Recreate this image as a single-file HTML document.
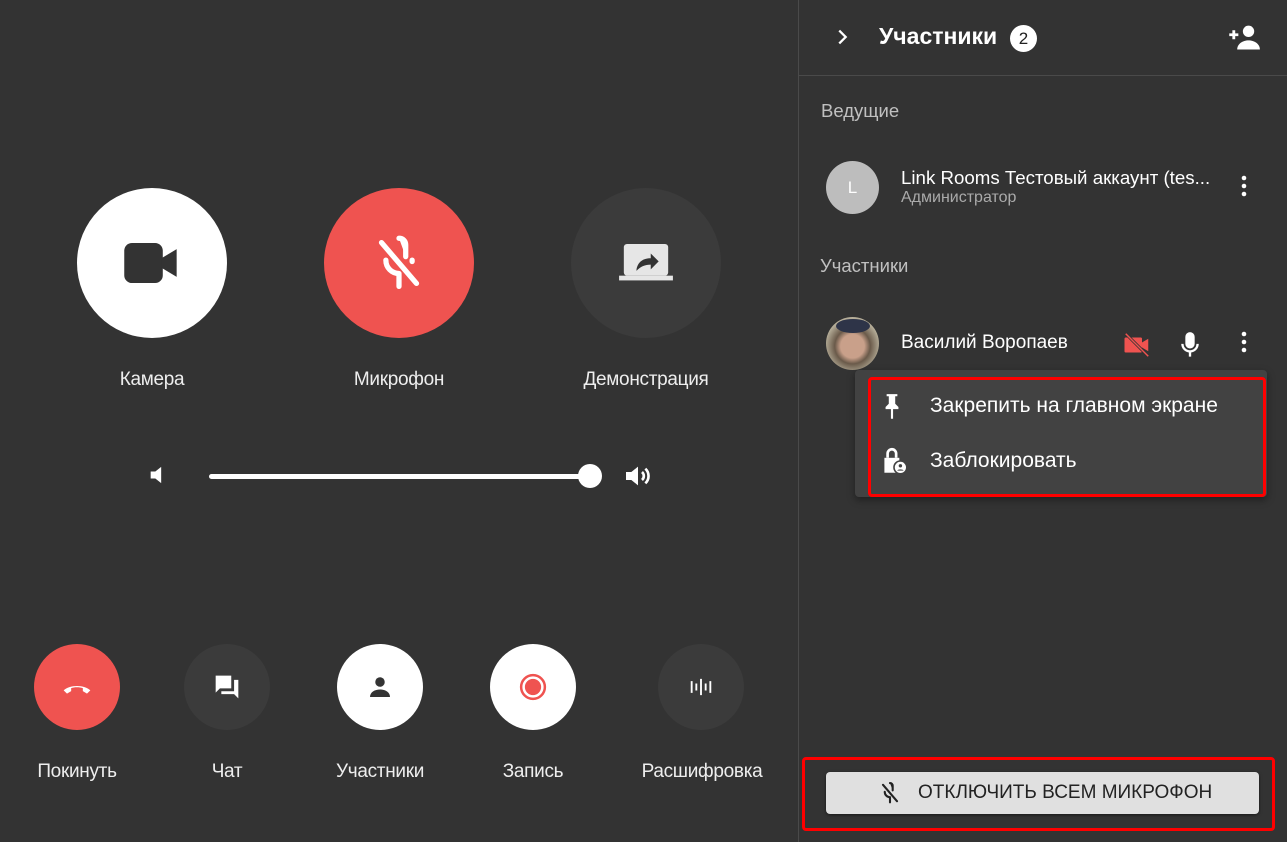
<!DOCTYPE html><html><head><meta charset="utf-8"><style>
*{margin:0;padding:0;box-sizing:border-box}
body{width:1287px;height:842px;background:#333;font-family:"Liberation Sans",sans-serif;color:#fff;position:relative;overflow:hidden}
.a{position:absolute}
.c{position:absolute;border-radius:50%;display:flex;align-items:center;justify-content:center}
.lbl{position:absolute;font-size:19px;color:#eee;transform:translateX(-50%);white-space:nowrap;letter-spacing:-0.3px}
</style></head><body>
<div class="c" style="left:77px;top:188px;width:150px;height:150px;background:#fff">
<svg width="74" height="74" viewBox="0 0 24 24"><rect x="3" y="5.5" width="12.5" height="13" rx="2.5" fill="#333"/><path d="M15 10.5l5-3v9l-5-3z" fill="#333"/></svg></div>
<div class="c" style="left:324px;top:188px;width:150px;height:150px;background:#ef5350">
<svg width="70" height="70" viewBox="0 0 24 24" fill="none" stroke="#fff" stroke-width="1.8" stroke-linecap="round"><path d="M12 3.5c1.4 0 2.3 1 2.3 2.3v4" fill="#fff"/><path d="M7.5 11c0 2.6 2 4.6 4.5 4.6"/><path d="M12 16v4"/><path d="M6 5l12 14"/><path d="M16.5 11v0.5"/></svg></div>
<div class="c" style="left:571px;top:188px;width:150px;height:150px;background:#3b3b3b">
<svg width="76" height="76" viewBox="0 0 24 24"><rect x="5" y="6" width="14" height="10" rx="1" fill="#e6e6e6"/><rect x="3.5" y="16" width="17" height="1.5" fill="#e6e6e6"/><path d="M9 14c0.5-2.5 2.2-3.5 4.5-3.5V9l2.5 2.5-2.5 2.5v-1.5c-1.8 0-3.3.6-4.5 2z" fill="#333"/></svg></div>
<div class="lbl" style="left:152px;top:369px">Камера</div>
<div class="lbl" style="left:399px;top:369px">Микрофон</div>
<div class="lbl" style="left:646px;top:369px">Демонстрация</div>
<svg class="a" style="left:146px;top:461px" width="28" height="28" viewBox="0 0 24 24"><path d="M4 9h4l5-4v14l-5-4H4z" fill="#fff"/></svg>
<div class="a" style="left:209px;top:474px;width:381px;height:5px;border-radius:3px;background:#fff"></div>
<div class="a" style="left:578px;top:464px;width:24px;height:24px;border-radius:50%;background:#fff"></div>
<svg class="a" style="left:622px;top:460px" width="32" height="32" viewBox="0 0 24 24" fill="none"><path d="M3 9h4l5-4v14l-5-4H3z" fill="#fff"/><path d="M15 9a4 4 0 0 1 0 6M17.5 6.5a7.5 7.5 0 0 1 0 11" stroke="#fff" stroke-width="2"/></svg>
<div class="c" style="left:34px;top:644px;width:86px;height:86px;background:#ef5350"><svg width="40" height="40" viewBox="0 0 24 24"><path d="M4 14c3.5-3.5 12.5-3.5 16 0l-2 2-2.5-1.5v-1.8c-2-.7-5-.7-7 0v1.8L6 16z" fill="#fff"/></svg></div>
<div class="c" style="left:184px;top:644px;width:86px;height:86px;background:#3b3b3b"><svg width="34" height="34" viewBox="0 0 24 24"><path d="M4 4h11v9H7l-3 3z" fill="#fff"/><path d="M17 7h3v13l-3-3H8v-2h9z" fill="#fff"/></svg></div>
<div class="c" style="left:337px;top:644px;width:86px;height:86px;background:#fff"><svg width="30" height="30" viewBox="0 0 24 24"><circle cx="12" cy="8" r="3.8" fill="#333"/><path d="M4 20c0-4 4-6 8-6s8 2 8 6z" fill="#333"/></svg></div>
<div class="c" style="left:490px;top:644px;width:86px;height:86px;background:#fff"><svg width="30" height="30" viewBox="0 0 24 24"><circle cx="12" cy="12" r="9.5" fill="none" stroke="#ef5350" stroke-width="2"/><circle cx="12" cy="12" r="6.5" fill="#ef5350"/></svg></div>
<div class="c" style="left:658px;top:644px;width:86px;height:86px;background:#3b3b3b"><svg width="28" height="28" viewBox="0 0 24 24" stroke="#fff" stroke-width="1.6"><path d="M4 7v10M8 9v6M12 5v14M16 9v6M20 7v10"/></svg></div>
<div class="lbl" style="left:77px;top:761px">Покинуть</div>
<div class="lbl" style="left:227px;top:761px">Чат</div>
<div class="lbl" style="left:380px;top:761px">Участники</div>
<div class="lbl" style="left:533px;top:761px">Запись</div>
<div class="lbl" style="left:702px;top:761px">Расшифровка</div>
<div class="a" style="left:798px;top:0;width:1px;height:842px;background:#4a4a4a"></div>
<div class="a" style="left:799px;top:75px;width:488px;height:1px;background:#4a4a4a"></div>
<svg class="a" style="left:831px;top:26px" width="22" height="22" viewBox="0 0 24 24"><path d="M9 5l7 7-7 7" fill="none" stroke="#fff" stroke-width="2.5"/></svg>
<div class="a" style="left:879px;top:23px;font-size:23px;font-weight:bold">Участники</div>
<div class="c" style="left:1010px;top:25px;width:27px;height:27px;background:#fff;color:#222;font-size:17px">2</div>
<svg class="a" style="left:1227px;top:22px" width="34" height="30" viewBox="0 0 30 26"><circle cx="19" cy="8" r="5" fill="#fff"/><path d="M9 24c0-5 5-8 10-8s10 3 10 8z" fill="#fff"/><path d="M2 11h8M6 7v8" stroke="#fff" stroke-width="2.5"/></svg>
<div class="a" style="left:821px;top:100px;font-size:18.5px;color:#c0c0c0">Ведущие</div>
<div class="c" style="left:826px;top:161px;width:53px;height:53px;background:#bdbdbd;font-size:17px">L</div>
<div class="a" style="left:901px;top:167px;font-size:18.7px">Link Rooms Тестовый аккаунт (tes...</div>
<div class="a" style="left:901px;top:189px;font-size:16px;color:#aaa">Администратор</div>
<svg class="a" style="left:1236px;top:174px" width="16" height="24" viewBox="0 0 16 24" fill="#fff"><circle cx="8" cy="4" r="2.3"/><circle cx="8" cy="12" r="2.3"/><circle cx="8" cy="20" r="2.3"/></svg>
<div class="a" style="left:820px;top:255px;font-size:18.5px;color:#c0c0c0">Участники</div>
<div class="c" style="left:826px;top:317px;width:53px;height:53px;background:radial-gradient(circle at 50% 55%,#c9a08a 0 30%,#6a5a4a 45%,#b5ad98 70%);overflow:hidden"><div style="position:absolute;left:10px;top:2px;width:34px;height:14px;border-radius:50%;background:#2e3448"></div></div>
<div class="a" style="left:901px;top:332px;font-size:19px">Василий Воропаев</div>
<svg class="a" style="left:1122px;top:330px" width="30" height="30" viewBox="0 0 24 24"><rect x="2" y="6" width="14" height="12" rx="1" fill="#ef5350"/><path d="M16 10l5-3v10l-5-3z" fill="#ef5350"/><path d="M3 3l18 18" stroke="#333" stroke-width="2.4"/><path d="M3 3l18 18" stroke="#ef5350" stroke-width="1.2"/></svg>
<svg class="a" style="left:1176px;top:330px" width="28" height="30" viewBox="0 0 24 24" fill="none" stroke="#fff" stroke-width="2"><rect x="9" y="2" width="6" height="12" rx="3" fill="#fff"/><path d="M5.5 11a6.5 6.5 0 0 0 13 0M12 17.5v4.5"/></svg>
<svg class="a" style="left:1236px;top:330px" width="16" height="24" viewBox="0 0 16 24" fill="#fff"><circle cx="8" cy="4" r="2.3"/><circle cx="8" cy="12" r="2.3"/><circle cx="8" cy="20" r="2.3"/></svg>
<div class="a" style="left:855px;top:370px;width:412px;height:127px;background:#424242;border-radius:4px;box-shadow:0 3px 8px rgba(0,0,0,.4)"></div>
<div class="a" style="left:868px;top:377px;width:398px;height:120px;border:3px solid #f00;border-radius:4px"></div>
<svg class="a" style="left:879px;top:392px" width="26" height="30" viewBox="0 0 24 28"><path d="M7 2h10v2h-2v7l3 3v2h-5v9h-2v-9H6v-2l3-3V4H7z" fill="#fff"/></svg>
<div class="a" style="left:930px;top:394px;font-size:21px">Закрепить на главном экране</div>
<svg class="a" style="left:878px;top:445px" width="32" height="32" viewBox="0 0 30 30"><path d="M6 12h14v14H6z" fill="#fff"/><path d="M9 12V8a4 4 0 0 1 8 0v4" fill="none" stroke="#fff" stroke-width="2.5"/><circle cx="21" cy="21" r="6" fill="#fff" stroke="#424242" stroke-width="1.5"/><circle cx="21" cy="19.5" r="1.6" fill="#424242"/><path d="M18 24c1-1.5 5-1.5 6 0" fill="#424242"/></svg>
<div class="a" style="left:930px;top:449px;font-size:21px">Заблокировать</div>
<div class="a" style="left:802px;top:757px;width:473px;height:74px;border:3px solid #f00;border-radius:4px"></div>
<div class="a" style="left:826px;top:772px;width:433px;height:42px;background:#e0e0e0;border-radius:4px;box-shadow:0 1px 3px rgba(0,0,0,.5)"></div>
<svg class="a" style="left:876px;top:779px" width="28" height="28" viewBox="0 0 24 24" fill="none" stroke="#222" stroke-width="1.8" stroke-linecap="round"><path d="M12 3.5c1.4 0 2.3 1 2.3 2.3v4" fill="#222"/><path d="M7.5 11c0 2.6 2 4.6 4.5 4.6"/><path d="M12 16v4"/><path d="M6 5l12 14"/></svg>
<div class="a" style="left:918px;top:782px;font-size:19px;color:#222">ОТКЛЮЧИТЬ ВСЕМ МИКРОФОН</div>
</body></html>
